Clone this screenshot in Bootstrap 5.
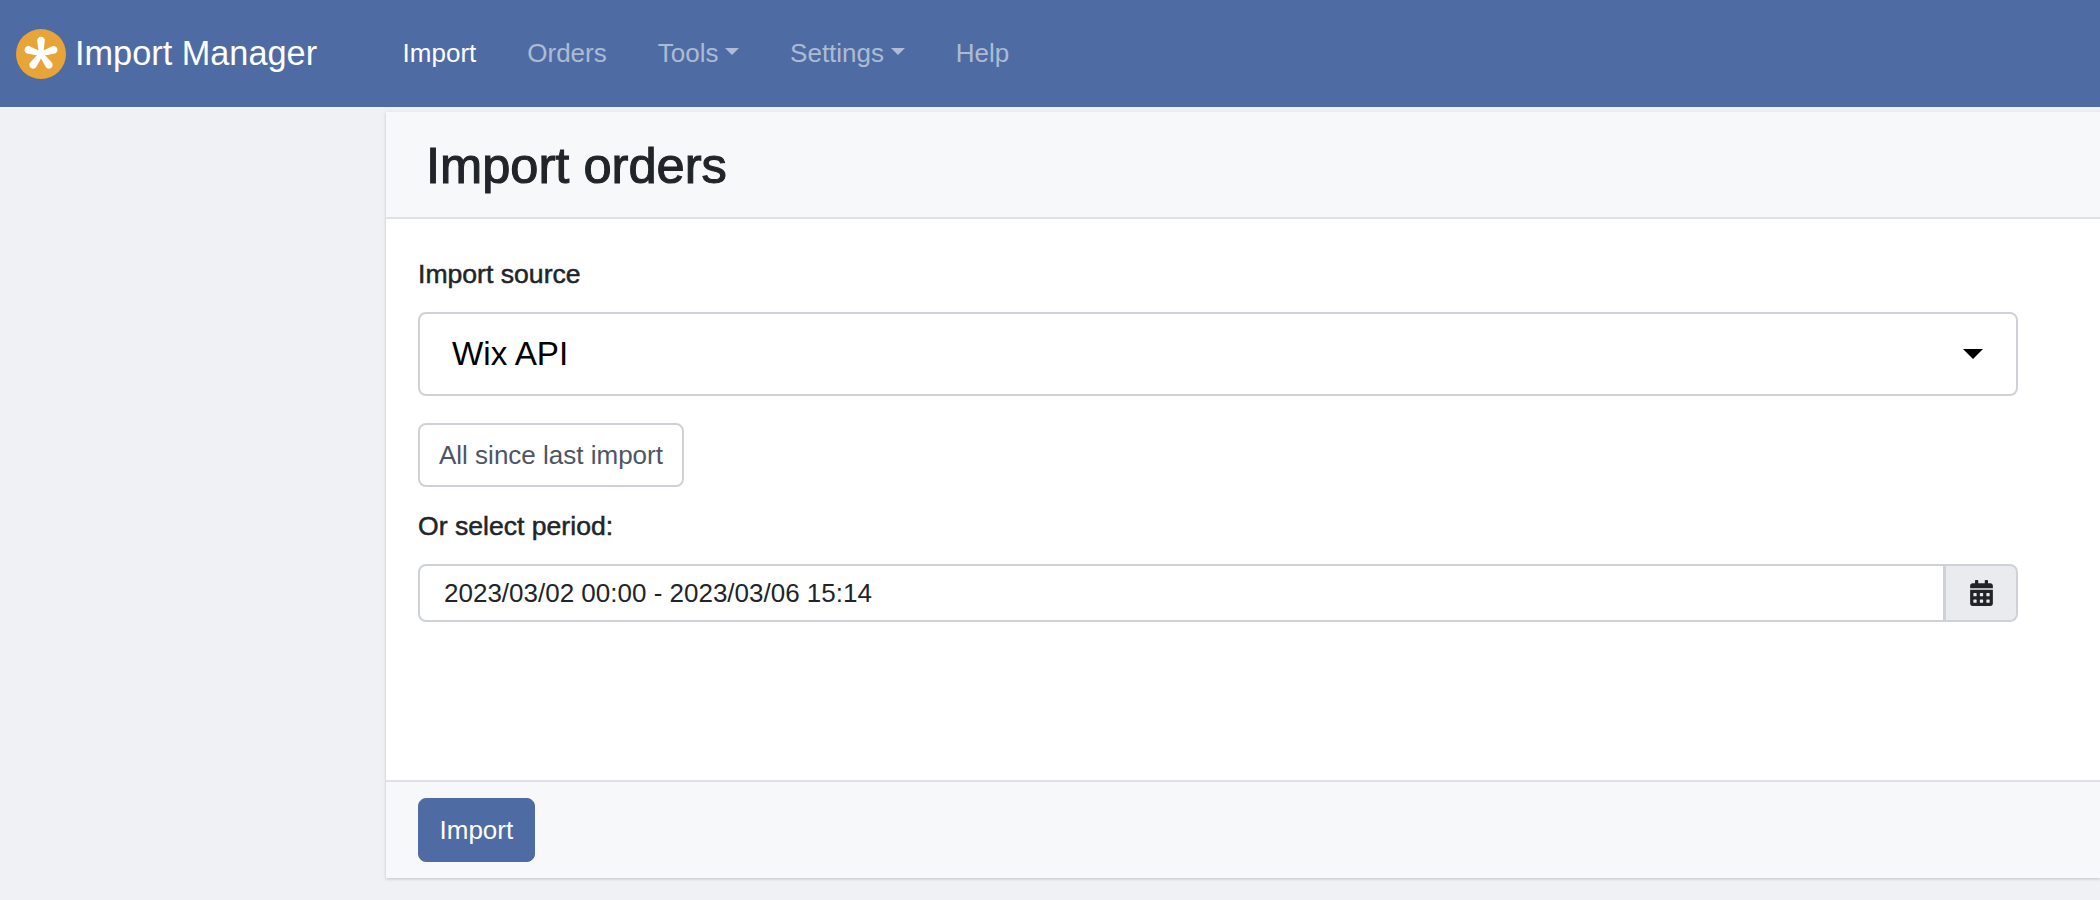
<!DOCTYPE html>
<html lang="en">
<head>
  <meta charset="UTF-8">
  <meta name="viewport" content="width=device-width, initial-scale=1.0">
  <title>Import orders - Import Manager</title>
  <link href="https://cdn.jsdelivr.net/npm/bootstrap@5.3.0/dist/css/bootstrap.min.css" rel="stylesheet">
  <style>
    html, body {
      height: 100%;
    }

    body {
      background: #f0f1f5;
      color: #212529;
      font-family: "Liberation Sans", Arial, sans-serif;
      font-size: 26px;
      overflow: hidden;
    }

    .top-bar {
      background: #4e6ca3;
      height: 107px;
      padding: 0 16px;
    }

    .top-bar .navbar-brand {
      color: #fff;
      font-size: 34.3px;
      gap: 9px;
      margin-right: 60px;
      padding: 0;
    }

    .top-bar .navbar-nav .nav-link {
      color: rgba(255, 255, 255, .55);
      font-size: 26px;
      padding: 0 25.5px;
    }

    .top-bar .navbar-nav .nav-link.active {
      color: #fff;
    }

    .import-panel {
      background: #fff;
      box-shadow: 0 1px 3px rgba(0, 0, 0, .2);
      height: 766px;
      margin: 5px 0 0 386px;
    }

    .panel-head {
      background: #f7f8fa;
      border-bottom: 2px solid #e0e1e7;
      height: 107px;
      padding: 4px 0 0 40px;
    }

    .panel-head h1 {
      font-size: 50.6px;
      margin: 0;
      font-weight: 400;
      -webkit-text-stroke: 1.1px #212529;
    }

    .panel-form {
      padding: 36px 82px 0 32px;
    }

    .field-label {
      display: block;
      line-height: 38px;
      margin-bottom: 19px;
      font-size: 26.6px;
      -webkit-text-stroke: .5px #212529;
    }

    .source-select {
      border: 2px solid #ced2d8;
      border-radius: 8px;
      color: #000;
      font-size: 33.2px;
      height: 84px;
      padding: 0 32px;
      background-image: url("data:image/svg+xml,%3Csvg xmlns='http://www.w3.org/2000/svg' viewBox='0 0 20 10'%3E%3Cpath d='M0 0h20L10 10z'/%3E%3C/svg%3E");
      background-position: right 33px center;
      background-size: 20px 10px;
    }

    .since-btn {
      background: #fff;
      border: 2px solid #ced2d8;
      border-radius: 8px;
      color: #4d5564;
      font-size: 26px;
      height: 64px;
      margin: 27px 0 20px;
      padding: 0 19px;
    }

    .period-group .form-control {
      border: 2px solid #ced2d8;
      border-radius: 8px 0 0 8px;
      color: #212529;
      font-size: 26px;
      height: 58px;
      padding: 0 24px;
    }

    .period-group .input-group-text {
      background: #e9ebef;
      border: 2px solid #ced2d8;
      border-radius: 0 8px 8px 0;
      justify-content: center;
      width: 74px;
    }

    .cal-icon {
      fill: #212529;
      height: 26px;
      width: 23px;
    }

    .panel-foot {
      background: #f7f8fa;
      border-top: 2px solid #e0e1e7;
      height: 98px;
      padding: 16px 32px;
    }

    .import-btn {
      background: #4e6ca3;
      border: 1px solid #4e6ca3;
      border-radius: 8px;
      color: #fff;
      font-size: 26px;
      height: 64px;
      padding: 0 20.5px;
    }
  </style>
</head>
<body>

  <!-- Header -->
  <nav class="navbar navbar-expand navbar-dark top-bar">
    <a class="navbar-brand d-flex align-items-center" href="#">
      <svg width="50" height="50" viewBox="0 0 50 50" aria-hidden="true">
        <circle cx="25" cy="25" r="25" fill="#e8a437"/>
        <g fill="#fff">
          <path id="petal" d="M22.8 25 L21.3 12.5 a3.8 3.8 0 1 1 7.4 0 L27.2 25z"/>
          <path d="M22.8 25 L21.3 12.5 a3.8 3.8 0 1 1 7.4 0 L27.2 25z" transform="rotate(72 25 25)"/>
          <path d="M22.8 25 L21.3 12.5 a3.8 3.8 0 1 1 7.4 0 L27.2 25z" transform="rotate(144 25 25)"/>
          <path d="M22.8 25 L21.3 12.5 a3.8 3.8 0 1 1 7.4 0 L27.2 25z" transform="rotate(216 25 25)"/>
          <path d="M22.8 25 L21.3 12.5 a3.8 3.8 0 1 1 7.4 0 L27.2 25z" transform="rotate(288 25 25)"/>
        </g>
      </svg>
      Import Manager
    </a>
    <ul class="navbar-nav">
      <li class="nav-item"><a class="nav-link active" href="#">Import</a></li>
      <li class="nav-item"><a class="nav-link" href="#">Orders</a></li>
      <li class="nav-item"><a class="nav-link dropdown-toggle" href="#">Tools</a></li>
      <li class="nav-item"><a class="nav-link dropdown-toggle" href="#">Settings</a></li>
      <li class="nav-item"><a class="nav-link" href="#">Help</a></li>
    </ul>
  </nav>

  <!-- Import panel -->
  <section class="import-panel d-flex flex-column">
    <div class="panel-head d-flex align-items-center">
      <h1>Import orders</h1>
    </div>
    <div class="panel-form flex-grow-1">
      <label class="field-label" for="source">Import source</label>
      <select class="form-select source-select" id="source">
        <option>Wix API</option>
      </select>
      <button type="button" class="btn since-btn d-block">All since last import</button>
      <label class="field-label" for="period">Or select period:</label>
      <div class="input-group period-group">
        <input type="text" class="form-control" id="period" value="2023/03/02 00:00 - 2023/03/06 15:14">
        <span class="input-group-text">
          <svg class="cal-icon" viewBox="0 0 448 512" aria-hidden="true"><path d="M0 464c0 26.5 21.5 48 48 48h352c26.5 0 48-21.5 48-48V192H0v272zm320-196c0-6.6 5.4-12 12-12h40c6.6 0 12 5.4 12 12v40c0 6.6-5.4 12-12 12h-40c-6.6 0-12-5.4-12-12v-40zm0 128c0-6.6 5.4-12 12-12h40c6.6 0 12 5.4 12 12v40c0 6.6-5.4 12-12 12h-40c-6.6 0-12-5.4-12-12v-40zM192 268c0-6.6 5.4-12 12-12h40c6.6 0 12 5.4 12 12v40c0 6.6-5.4 12-12 12h-40c-6.6 0-12-5.4-12-12v-40zm0 128c0-6.6 5.4-12 12-12h40c6.6 0 12 5.4 12 12v40c0 6.6-5.4 12-12 12h-40c-6.6 0-12-5.4-12-12v-40zM64 268c0-6.6 5.4-12 12-12h40c6.6 0 12 5.4 12 12v40c0 6.6-5.4 12-12 12H76c-6.6 0-12-5.4-12-12v-40zm0 128c0-6.6 5.4-12 12-12h40c6.6 0 12 5.4 12 12v40c0 6.6-5.4 12-12 12H76c-6.6 0-12-5.4-12-12v-40zM400 64h-48V16c0-8.8-7.2-16-16-16h-32c-8.8 0-16 7.2-16 16v48H160V16c0-8.8-7.2-16-16-16h-32c-8.8 0-16 7.2-16 16v48H48C21.5 64 0 85.5 0 112v48h448v-48c0-26.5-21.5-48-48-48z"/></svg>
        </span>
      </div>
    </div>
    <div class="panel-foot">
      <button type="button" class="btn import-btn">Import</button>
    </div>
  </section>

  <script src="https://cdn.jsdelivr.net/npm/bootstrap@5.3.0/dist/js/bootstrap.bundle.min.js"></script>
</body>
</html>
